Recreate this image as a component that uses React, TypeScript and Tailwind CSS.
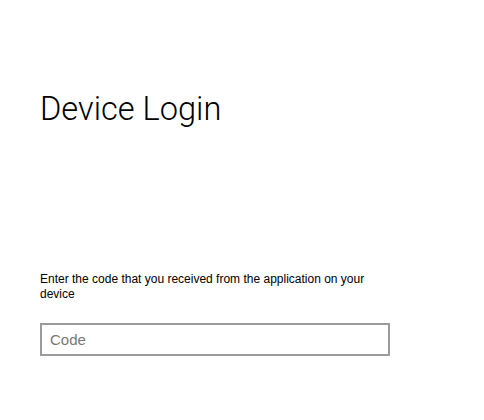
export default function App() {
  return (
    <div className="min-h-[420px] bg-white pl-[40px]" style={{ fontFamily: '"Helvetica Neue", "Liberation Sans", Arial, sans-serif' }}>
      <div className="w-[350px]">
        <h1 className="pt-[89px] text-[32.6px] leading-[40px] font-light text-black" style={{ fontFamily: 'Roboto, "Liberation Sans", sans-serif' }}>
          Device Login
        </h1>
        <p className="mt-[143px] text-[12px] leading-[15px] text-black">
          Enter the code that you received from the application on your device
        </p>
        <input
          type="text"
          placeholder="Code"
          className="mt-[21px] block w-[350px] h-[33px] border-2 border-[#9b9b9b] px-[8px] text-[15px] text-black placeholder:text-[#777] outline-none"
        />
      </div>
    </div>
  );
}
